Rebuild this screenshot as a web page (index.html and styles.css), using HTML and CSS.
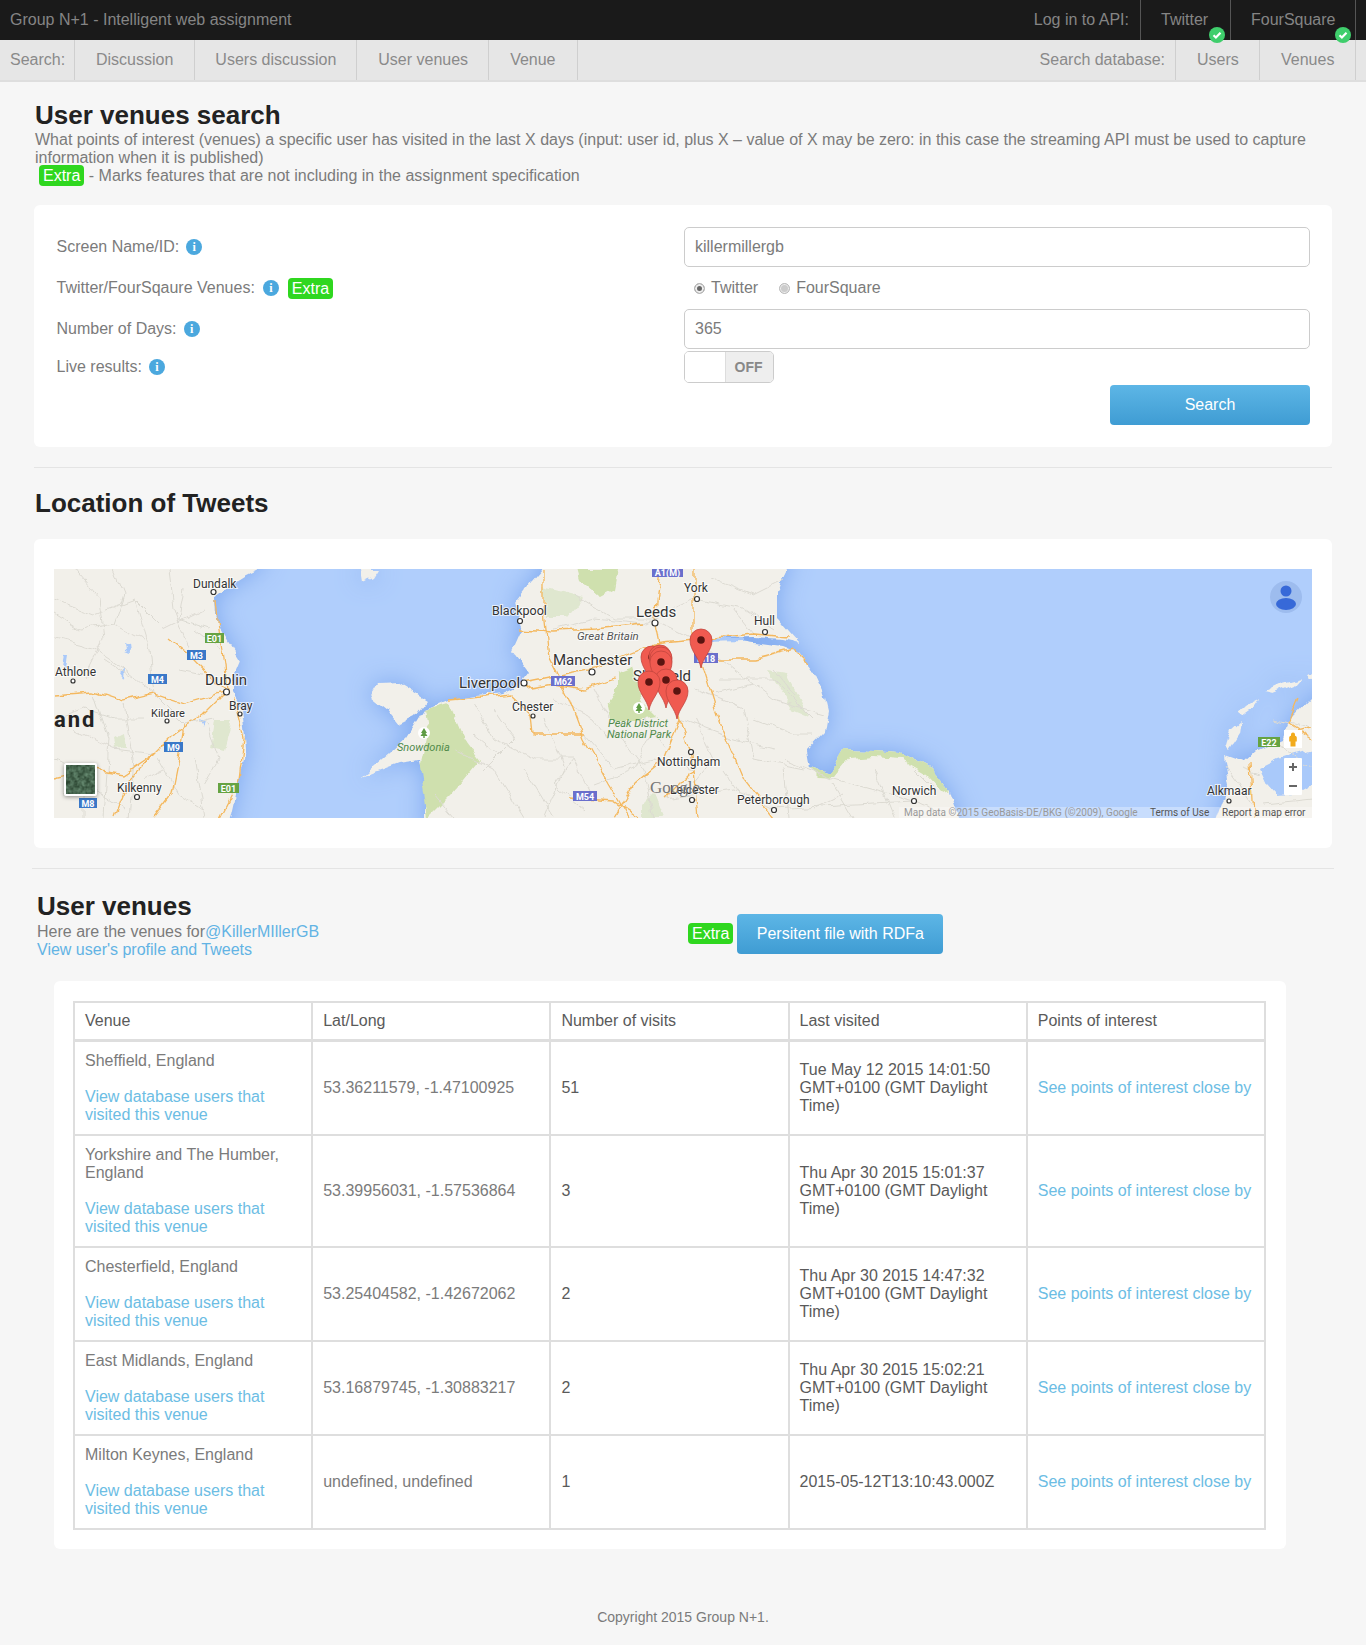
FILE: index.html
```html
<!DOCTYPE html>
<html lang="en">
<head>
<meta charset="utf-8">
<title>User venues search</title>
<link rel="stylesheet" href="styles.css">
</head>
<body>
<header class="topbar">
  <div class="brand">Group N+1 - Intelligent web assignment</div>
  <nav class="top-right">
    <span class="top-label">Log in to API:</span>
    <a class="top-item top-twitter">Twitter<span class="check"><svg viewBox="0 0 16 16"><path class="check-mark" d="M4.5 8.2l2.4 2.3 4.6-4.8"/></svg></span></a>
    <a class="top-item top-four">FourSquare<span class="check"><svg viewBox="0 0 16 16"><path class="check-mark" d="M4.5 8.2l2.4 2.3 4.6-4.8"/></svg></span></a>
  </nav>
</header>
<nav class="subbar">
  <span class="sub-label">Search:</span>
  <a class="sub-item sub-first">Discussion</a>
  <a class="sub-item sub-second">Users discussion</a>
  <a class="sub-item">User venues</a>
  <a class="sub-item sub-last">Venue</a>
  <span class="sub-spacer"></span>
  <span class="sub-label sub-label-right">Search database:</span>
  <a class="sub-item sub-right">Users</a>
  <a class="sub-item sub-right sub-venues">Venues</a>
</nav>

<main class="page">
  <h1 class="title">User venues search</h1>
  <p class="lead">What points of interest (venues) a specific user has visited in the last X days (input: user id, plus X – value of X may be zero: in this case the streaming API must be used to capture information when it is published)<br><span class="extra extra-lead">Extra</span> - Marks features that are not including in the assignment specification</p>

  <section class="card form-card">
    <div class="form-grid">
      <div class="label">Screen Name/ID: <span class="info">i</span></div>
      <input class="field" value="killermillergb">
      <div class="label label-wide">Twitter/FourSqaure Venues: <span class="info">i</span> <span class="extra">Extra</span></div>
      <div class="radios">
        <span class="radio radio-on"></span><span class="radio-text">Twitter</span>
        <span class="radio"></span><span class="radio-text">FourSquare</span>
      </div>
      <div class="label">Number of Days: <span class="info">i</span></div>
      <input class="field" value="365">
      <div class="label">Live results: <span class="info">i</span></div>
      <div class="toggle"><span class="knob"></span><span class="off">OFF</span></div>
      <div></div>
      <div class="actions"><a class="btn btn-search">Search</a></div>
    </div>
  </section>

  <hr class="rule">
  <h2 class="title">Location of Tweets</h2>

  <section class="card map-card">
    <svg class="map" viewBox="0 0 1258 249" width="1258" height="249" role="img" aria-label="Map">
      <defs>
        <filter id="rough" x="-30" y="-30" width="1320" height="310" filterUnits="userSpaceOnUse">
          <feTurbulence type="fractalNoise" baseFrequency="0.06" numOctaves="3" seed="4"/>
          <feDisplacementMap in="SourceGraphic" scale="9" xChannelSelector="R" yChannelSelector="G"/>
        </filter>
        <filter id="sat" x="0" y="0" width="1" height="1">
          <feTurbulence type="fractalNoise" baseFrequency="0.25" numOctaves="2" seed="8"/>
          <feColorMatrix values="0 0 0 0 .13  0 0 0 0 .25  0 0 0 0 .16  0 0 0 1.6 -.3"/>
        </filter>
        <g id="pin">
          <path class="pin" d="M0 28C-2 17-11 11-11 0A11 11 0 0 1 11 0C11 11 2 17 0 28Z"/>
          <circle class="pin-dot" r="3.800"/>
        </g>
      </defs>
      <rect class="water" width="1258" height="249"/>
      <g class="land-group">
        <g filter="url(#rough)">
          <path class="land" d="M-20-20H215L206 0 190 8 174 18 161 28 162 45 166 58 176 75 186 91 178 110 178 124 188 140 190 158 192 180 186 204 176 249 170 270H-20Z"/>
          <path class="land" d="M308 0H325L320 8 310 13Z"/>
          <path class="land" d="M490-20H735L733 0 727 12 723 24 723 48 735 62 746 74 730 70 700 68 666 69 700 74 730 78 746 84 759 101 768 120 773 141 769 164 753 181 756 198 776 204 789 181 820 182 846 184 879 201 896 221 905 249 910 270H372V218L366 191 345 194 308 208 335 185 353 168 370 141 394 131 447 124 468 114 476 104 459 81 468 61 461 34 476 14 488 0Z"/>
          <path class="land" d="M317 128L325 114 345 113 374 131 361 148 345 156 333 141Z"/>
          <path class="land" d="M1280 110L1258 128 1236 151 1228 170 1203 181 1190 193 1170 186 1175 215 1163 249 1160 270H1280Z"/>
          <path class="land" d="M1211 122L1228 114 1246 109 1240 116 1220 124Z"/>
          <path class="land" d="M1184 144L1195 135 1205 130 1198 140 1188 147Z"/>
          <path class="land" d="M1173 177L1178 160 1188 151 1186 165 1176 180Z"/>
          <circle class="land" cx="1255" cy="108" r="3"/>
        </g>
      </g>
      <g filter="url(#rough)">
        <path class="water-inner" d="M1205 200L1225 190 1258 180V215L1240 225 1222 226 1212 215Z"/>
        <path class="water-inner" d="M10 85L14 85 12 97 8 95ZM70 74L75 76 76 84 71 82ZM66 104L71 100 70 110ZM145 150L150 152 148 160ZM400 195L404 197 402 203ZM640 69L690 70 690 73 650 74Z"/>
        <path class="park" d="M563 104L579 98 589 134 603 148 583 151 556 151 553 138 563 124Z"/>
        <path class="park" d="M370 141L394 134 410 171 425 191 398 224 374 248 366 198 374 164Z"/>
        <path class="park" d="M523 0H563L559 21 546 28 526 11Z"/>
        <path class="park-pale" d="M489 18L529 28 513 48 493 48Z"/>
        <path class="park-pale" d="M161 151L178 151 170 181 157 178Z"/>
        <path class="park-pale" d="M713 101L733 104 756 148 739 141Z"/>
        <path class="park-pale" d="M60 170L70 165 72 178 62 180Z"/>
        <path class="park-pale" d="M590 235L600 225 610 249H590Z"/>
        <path class="park" d="M756 198L776 204 789 181 820 182 846 184 879 201 896 221 890 224 872 205 846 190 820 188 795 190 780 208 765 207Z"/>
        <path class="greys" d="M0 30L40 45 80 30 110 60 150 40M20 0L45 30 50 70 30 110M80 30L95 80 100 125M115 0L120 40 140 90M0 70L40 80 70 100 100 125M40 125L55 170 50 249M100 125L130 155 160 150M70 135L80 190 75 249M140 190L150 249M20 160L60 180 100 185M0 45L25 60 60 55 90 70M60 0L70 25 60 55M130 20L125 50 155 60M5 150L30 140 60 150 90 150M0 190L30 200 30 249M105 190L125 225 150 240M150 150L165 190 150 215M125 100L150 105M50 90L80 110M10 225L40 220 70 240M90 210L110 200M140 60L165 80M500 60L540 50 590 55 640 30 690 40 720 60M520 25L560 50 600 50 640 70M640 70L680 100 720 130 770 145M665 110L720 110 760 150M640 120L690 140 700 190 750 200M625 150L680 170 720 180M530 165L560 200 600 190 640 200M420 135L440 170 480 190 520 190 540 230M400 180L440 200 470 249M470 200L500 249M610 230L680 220 720 240 800 235 860 232M730 190L780 210 860 232 880 240M560 160L590 200 600 249M1170 195L1185 215 1200 240M1220 150L1258 160M1225 175L1258 200M500 130L540 150 555 170M660 10L700 25 730 10M680 40L700 65M720 100L740 125M660 125L700 115M640 150L660 190 640 215M700 150L740 165 760 165M730 200L735 249M780 215L800 249M820 200L840 249M860 200L880 220M590 150L610 180M540 120L555 150M490 150L510 200 490 249M440 140L460 170 430 200M420 165L445 185M380 225L400 249M520 190L500 215 530 240M670 200L690 230M760 240L790 225M600 160L580 200 540 215M1190 200L1205 205M1210 235L1258 230"/>
        <path class="roads" d="M162 30L165 60 170 95 172 123M172 123L130 135 100 125 70 132 40 122 0 125M172 123L150 145 120 165 100 185 70 205 40 200 0 210M130 155L125 190 118 225 100 249M172 123L140 90 115 70M180 130L190 170 185 210 165 249M100 185L75 210 60 249M490 0L490 40 495 90 515 130 530 170 555 215 575 249M470 114L540 100 600 75 650 70 700 65 735 68M606 0L600 50 610 100 626 150 640 200 645 249M640 0L640 70 665 150 690 210 720 249M640 90L700 90 740 80 755 95M394 131L430 128 455 125 478 147 480 165 530 165M465 60L500 62 540 60 590 55M470 120L500 115 530 120 560 110M515 229L560 232 585 249M1197 193L1200 249M1245 130L1235 155 1258 170M1230 165L1258 160M626 150L610 190 580 215 560 249M640 200L610 230"/>
      </g>
      <g class="shields">
        <rect class="sh-green" x="151" y="64" width="19" height="10"/><text class="sh-text" x="160.500" y="72.500">E01</text>
        <rect class="sh-blue" x="133" y="81" width="19" height="10"/><text class="sh-text" x="142.500" y="89.500">M3</text>
        <rect class="sh-blue" x="94" y="105" width="19" height="10"/><text class="sh-text" x="103.500" y="113.500">M4</text>
        <rect class="sh-blue" x="110" y="173" width="19" height="10"/><text class="sh-text" x="119.500" y="181.500">M9</text>
        <rect class="sh-green" x="164" y="214" width="21" height="10"/><text class="sh-text" x="174.500" y="222.500">E01</text>
        <rect class="sh-blue" x="25" y="229" width="18" height="10"/><text class="sh-text" x="34" y="237.500">M8</text>
        <rect class="sh-purple" x="497" y="107" width="24" height="10"/><text class="sh-text" x="509" y="115.500">M62</text>
        <rect class="sh-purple" x="519" y="222" width="24" height="10"/><text class="sh-text" x="531" y="230.500">M54</text>
        <rect class="sh-purple" x="598" y="0" width="31" height="8"/><text class="sh-text" x="613.500" y="7">A1(M)</text>
        <rect class="sh-purple" x="640" y="84" width="24" height="10"/><text class="sh-text" x="652" y="92.500">M18</text>
        <rect class="sh-green" x="1204" y="168" width="22" height="10"/><text class="sh-text" x="1215" y="176.500">E22</text>
      </g>
      <g class="towns">
        <circle cx="159.500" cy="23" r="2.500"/><circle cx="19" cy="112" r="2"/><circle cx="172.500" cy="123" r="3"/><circle cx="186" cy="145" r="2"/><circle cx="113" cy="152" r="2"/><circle cx="83" cy="228" r="2.500"/><circle cx="466" cy="52" r="2.500"/><circle cx="601" cy="54" r="3"/><circle cx="538" cy="103" r="3"/><circle cx="470" cy="114" r="3"/><circle cx="479" cy="147" r="2"/><circle cx="643" cy="30" r="2.500"/><circle cx="711" cy="63" r="2.500"/><circle cx="637" cy="183" r="2.500"/><circle cx="638" cy="231" r="2.500"/><circle cx="720" cy="241" r="2.500"/><circle cx="860" cy="232" r="2.500"/><circle cx="1175" cy="232" r="2"/>
      </g>
      <g class="places">
        <text class="pl" x="139" y="19">Dundalk</text>
        <text class="pl" x="1" y="107">Athlone</text>
        <text class="pl pl-big" x="151" y="116">Dublin</text>
        <text class="pl" x="175" y="141">Bray</text>
        <text class="pl pl-sm" x="97" y="148">Kildare</text>
        <text class="pl-country" x="0" y="158">and</text>
        <text class="pl" x="63" y="223">Kilkenny</text>
        <text class="pl pl-mid" x="438" y="46">Blackpool</text>
        <text class="pl pl-big" x="582" y="48">Leeds</text>
        <text class="pl pl-it" x="523" y="71">Great Britain</text>
        <text class="pl pl-big" x="499" y="96">Manchester</text>
        <text class="pl pl-big" x="405" y="119">Liverpool</text>
        <text class="pl" x="458" y="142">Chester</text>
        <text class="pl-green" x="343" y="182">Snowdonia</text>
        <text class="pl-green" x="554" y="158">Peak District</text>
        <text class="pl-green" x="553" y="169">National Park</text>
        <text class="pl" x="630" y="23">York</text>
        <text class="pl" x="700" y="56">Hull</text>
        <text class="pl pl-big" x="579" y="112">Sheffield</text>
        <text class="pl" x="603" y="197">Nottingham</text>
        <text class="pl" x="616" y="225">Leicester</text>
        <text class="pl" x="683" y="235">Peterborough</text>
        <text class="pl" x="838" y="226">Norwich</text>
        <text class="pl" x="1153" y="226">Alkmaar</text>
        <text class="pl-country pl-england" x="545" y="258">ENGLAND</text>
        <text class="google" x="596" y="224">Google</text>
      </g>
      <circle class="tree-bg" cx="370" cy="164" r="6"/><path class="tree" d="M370 159l-3 5h1.500l-2 3h2.800v2h1.400v-2h2.800l-2-3h1.500z"/>
      <circle class="tree-bg" cx="585" cy="139" r="6"/><path class="tree" d="M585 134l-3 5h1.500l-2 3h2.800v2h1.400v-2h2.800l-2-3h1.500z"/>
      <use href="#pin" x="598" y="88"/>
      <use href="#pin" x="606" y="87"/>
      <use href="#pin" x="607" y="89"/>
      <use href="#pin" x="607" y="93"/>
      <use href="#pin" x="647" y="71"/>
      <use href="#pin" x="612" y="111"/>
      <use href="#pin" x="595" y="113"/>
      <use href="#pin" x="623" y="122"/>
      <rect class="thumb-frame" x="10" y="194" width="33" height="33" rx="2"/>
      <rect x="12" y="196" width="29" height="29" fill="#2a4430"/>
      <rect x="12" y="196" width="29" height="29" filter="url(#sat)"/>
      <circle class="avatar-bg" cx="1232" cy="28" r="16"/>
      <circle class="avatar" cx="1232" cy="22" r="5.500"/>
      <ellipse class="avatar" cx="1232" cy="35" rx="10" ry="6"/>
      <rect class="ctrl" x="1230" y="161" width="18" height="18"/>
      <path class="pegman" d="M1239 163.500a2 2 0 0 1 2 2v1.300c1.200.3 1.800 1 1.800 2v3.700h-1.300v5h-5v-5h-1.300v-3.700c0-1 .6-1.700 1.800-2v-1.300a2 2 0 0 1 2-2z"/>
      <rect class="ctrl" x="1230" y="189" width="18" height="37" rx="1"/>
      <path class="zoom-mark" d="M1235 198h8M1239 194v8M1235 217h8"/>
      <rect class="attr-bg" x="845" y="238" width="413" height="11"/>
      <text class="attr" x="850" y="247">Map data ©2015 GeoBasis-DE/BKG (©2009), Google</text>
      <text class="attr attr-dark" x="1096" y="247">Terms of Use</text>
      <text class="attr attr-dark" x="1168" y="247">Report a map error</text>
    </svg>
  </section>

  <hr class="rule rule-wide">

  <section class="venues-head">
    <div class="venues-info">
      <h2 class="title">User venues</h2>
      <div class="lead lead-venues">Here are the venues for<a class="link">@KillerMIllerGB</a><br><a class="link">View user's profile and Tweets</a></div>
    </div>
    <div class="venues-actions">
      <span class="extra extra-btn">Extra</span>
      <a class="btn btn-rdfa">Persitent file with RDFa</a>
    </div>
  </section>

  <section class="card table-card">
    <table class="venues">
      <thead>
        <tr><th>Venue</th><th>Lat/Long</th><th>Number of visits</th><th>Last visited</th><th>Points of interest</th></tr>
      </thead>
      <tbody>
        <tr>
          <td class="muted">Sheffield, England<br><br><a class="link-soft">View database users that visited this venue</a></td>
          <td class="muted">53.36211579, -1.47100925</td>
          <td>51</td>
          <td>Tue May 12 2015 14:01:50 GMT+0100 (GMT Daylight Time)</td>
          <td><a class="link-soft">See points of interest close by</a></td>
        </tr>
        <tr>
          <td class="muted">Yorkshire and The Humber, England<br><br><a class="link-soft">View database users that visited this venue</a></td>
          <td class="muted">53.39956031, -1.57536864</td>
          <td>3</td>
          <td>Thu Apr 30 2015 15:01:37 GMT+0100 (GMT Daylight Time)</td>
          <td><a class="link-soft">See points of interest close by</a></td>
        </tr>
        <tr>
          <td class="muted">Chesterfield, England<br><br><a class="link-soft">View database users that visited this venue</a></td>
          <td class="muted">53.25404582, -1.42672062</td>
          <td>2</td>
          <td>Thu Apr 30 2015 14:47:32 GMT+0100 (GMT Daylight Time)</td>
          <td><a class="link-soft">See points of interest close by</a></td>
        </tr>
        <tr>
          <td class="muted">East Midlands, England<br><br><a class="link-soft">View database users that visited this venue</a></td>
          <td class="muted">53.16879745, -1.30883217</td>
          <td>2</td>
          <td>Thu Apr 30 2015 15:02:21 GMT+0100 (GMT Daylight Time)</td>
          <td><a class="link-soft">See points of interest close by</a></td>
        </tr>
        <tr>
          <td class="muted">Milton Keynes, England<br><br><a class="link-soft">View database users that visited this venue</a></td>
          <td class="muted">undefined, undefined</td>
          <td>1</td>
          <td>2015-05-12T13:10:43.000Z</td>
          <td><a class="link-soft">See points of interest close by</a></td>
        </tr>
      </tbody>
    </table>
  </section>
</main>
<footer class="footer">Copyright 2015 Group N+1.</footer>
</body>
</html>
```

FILE: styles.css
```css
* { box-sizing: border-box; }
html, body { margin: 0; padding: 0; }
body {
  background: #f6f6f6;
  color: #7b7b7b;
  font: 16px/18px "Liberation Sans", Arial, sans-serif;
  height: 1645px;
  overflow-x: hidden;
}

/* top bars */
.topbar {
  height: 40px;
  background: #1a1a1a;
  color: #858585;
  display: flex;
  justify-content: space-between;
  align-items: stretch;
  line-height: 39px;
}
.brand { padding-left: 10px; }
.top-right { display: flex; margin-right: 10px; }
.top-label { padding-right: 11px; }
.top-item { position: relative; border-left: 1px solid #555; padding: 0 21px 0 20px; }
.top-twitter { width: 90px; }
.top-four { width: 126px; border-right: 1px solid #555; }
.check {
  position: absolute;
  top: 27px;
  right: 5px;
  width: 16px;
  height: 16px;
  border-radius: 50%;
  background: #3fce6c;
  z-index: 2;
}
.top-four .check { right: 4px; }
.check svg { display: block; width: 16px; height: 16px; }
.check-mark { fill: none; stroke: #fff; stroke-width: 2.2; }
.subbar {
  height: 42px;
  background: #e6e6e6;
  border-bottom: 2px solid #dedede;
  color: #8a8a8a;
  display: flex;
  align-items: stretch;
  line-height: 39px;
  padding-right: 10px;
}
.sub-label { padding-left: 10px; padding-right: 0; width: 75px; border-right: 1px solid #cfcfcf; }
.sub-label-right { width: auto; padding-right: 10px; padding-left: 0; }
.sub-item { padding: 0 20px 0 21px; border-right: 1px solid #cfcfcf; }
.sub-first { padding-right: 21px; }
.sub-second { padding-left: 20px; }
.sub-last { padding: 0 21px 0 21px; }
.sub-right { width: 84px; }
.sub-venues { width: 96px; padding-left: 21px; }
.sub-spacer { flex: 1; }

/* page */
.page { padding: 18px 34px 0; }
.title {
  margin: 0;
  font-size: 26px;
  line-height: 31px;
  font-weight: 700;
  color: #222;
  padding-left: 1px;
}
.lead { margin: 0 0 20px; padding-left: 1px; }
.card { background: #fff; border-radius: 6px; }
.extra {
  display: inline-block;
  background: #2fd71f;
  color: #fff;
  border-radius: 4px;
  line-height: 21px;
  height: 21px;
  padding: 0 4px;
}
.extra-lead { margin: -2px 0 -1px 4px; vertical-align: top; }

.form-card { padding: 22px 22px 22px 22.500px; height: 242px; }
.form-grid {
  display: grid;
  grid-template-columns: 627.500px 626px;
  grid-template-rows: 40px 42px 40px 36px 40px;
  align-items: center;
}
.label { display: flex; align-items: center; gap: 7px; white-space: nowrap; }
.label-wide { gap: 8px; }
.label-wide .extra { margin-left: 1px; }
.info {
  width: 16px;
  height: 16px;
  border-radius: 50%;
  background: #4ba8de;
  color: #fff;
  font: 700 12px/16px "Liberation Serif", serif;
  text-align: center;
}
.field {
  width: 100%;
  height: 40px;
  border: 1px solid #ccc;
  border-radius: 5px;
  padding: 0 10px;
  font: 16px "Liberation Sans", Arial, sans-serif;
  color: #7b7b7b;
  background: #fff;
  outline: 0;
}
.radios { display: flex; align-items: center; padding-left: 10px; }
.radio {
  width: 11px;
  height: 11px;
  border-radius: 50%;
  background: #ccc;
  border: 1px solid #bbb;
  margin-right: 6px;
  box-shadow: inset 0 0 0 1px #eee;
}
.radio-on { background: #666; box-shadow: inset 0 0 0 2px #eee; }
.radio-text { margin-right: 21px; }
.toggle {
  width: 90px;
  height: 32px;
  border: 1px solid #ccc;
  border-radius: 5px;
  display: flex;
  overflow: hidden;
}
.knob { width: 41px; background: #fff; border-right: 1px solid #ddd; }
.off {
  flex: 1;
  background: #eee;
  color: #888;
  font-weight: 700;
  font-size: 14px;
  line-height: 30px;
  text-align: center;
  padding-right: 2px;
}
.actions { display: flex; justify-content: flex-end; }
.btn {
  display: block;
  height: 40px;
  line-height: 39px;
  border-radius: 4px;
  color: #fff;
  text-align: center;
  background: linear-gradient(#5db6e6, #3f9cd3);
}
.btn-search { width: 200px; }
.btn-rdfa { width: 206px; }

.rule { border: 0; height: 1px; background: #e4e4e4; margin: 20px 0; }
.rule-wide { margin: 20px -2px 22px; }
.map-card { margin-top: 20px; padding: 30px 20px; height: 309px; }
.map { display: block; }

/* map drawing */
.water { fill: #b0cefc; }
.land-group { filter: drop-shadow(0 0 12px #7ea8ee); }
.land { fill: #f2f0ea; }
.water-inner { fill: #a9c9fa; }
.park { fill: #cfe0ae; }
.park-pale { fill: #dfe7cf; }
.greys { fill: none; stroke: #dcdad2; stroke-width: 1; }
.roads { fill: none; stroke: #f4b85e; stroke-width: 1.3; }
.sh-green { fill: #66a342; }
.sh-blue { fill: #3a78c8; }
.sh-purple { fill: #6a6fcc; }
.sh-text {
  fill: #fff;
  font: 700 9px "Roboto", "Liberation Sans", sans-serif;
  text-anchor: middle;
}
.towns circle { fill: #fff; stroke: #333; stroke-width: 1.2; }
.pl {
  font: 12px "Roboto", "Liberation Sans", sans-serif;
  fill: #333;
  paint-order: stroke;
  stroke: rgba(255, 255, 255, .7);
  stroke-width: 2px;
}
.pl-big { font-size: 15px; }
.pl-mid { font-size: 12.500px; }
.pl-sm { font-size: 11px; }
.pl-it { font-style: italic; font-size: 11.500px; fill: #555; }
.pl-green { font: italic 11px "Roboto", "Liberation Sans", sans-serif; fill: #4f8a4a; }
.pl-country { font: 700 22px "Roboto", "Liberation Sans", sans-serif; letter-spacing: 2px; fill: #222; }
.pl-england { font-size: 13px; fill: #555; letter-spacing: 3px; }
.google { font: 17px "Liberation Serif", serif; fill: #777; }
.tree-bg { fill: #fff; }
.tree { fill: #5f9c44; }
.pin { fill: #f05a50; stroke: #c2453d; stroke-width: .8; }
.pin-dot { fill: #5a1410; }
.thumb-frame { fill: #fff; filter: drop-shadow(0 1px 2px rgba(0, 0, 0, .4)); }
.avatar-bg { fill: #9dbcee; }
.avatar { fill: #3769d8; }
.ctrl { fill: #fff; }
.pegman { fill: #f2ab1d; }
.zoom-mark { stroke: #666; stroke-width: 2; fill: none; }
.attr-bg { fill: rgba(255, 255, 255, .3); }
.attr { font: 10px "Roboto", "Liberation Sans", sans-serif; fill: #999; }
.attr-dark { fill: #555; }

/* venues */
.venues-head { display: flex; padding-left: 3px; height: 70px; margin-bottom: 20px; }
.venues-info { width: 651px; }
.venues-info .lead { margin: 0; padding: 1px 0 0; }
.venues-info .title { padding: 0; }
.venues-actions { display: flex; gap: 4px; align-items: flex-start; padding-top: 23px; }
.extra-btn { margin-top: 9px; }
.link { color: #62b3e4; }
.link-soft { color: #6cbde4; }
.table-card { margin-left: 20px; width: 1232px; padding: 20px 20px 19px 19px; }
.venues {
  width: 1193px;
  table-layout: fixed;
  border-collapse: collapse;
  color: #5a5a5a;
}
.venues th, .venues td {
  border: 2px solid #dedede;
  padding: 10px;
  font-weight: 400;
  text-align: left;
}
.venues thead th { border-bottom-width: 3px; padding: 9px 10px; }
.venues .muted { color: #7b7b7b; }

.footer {
  margin-top: 59px;
  text-align: center;
  font-size: 14px;
  color: #7b7b7b;
}
```
